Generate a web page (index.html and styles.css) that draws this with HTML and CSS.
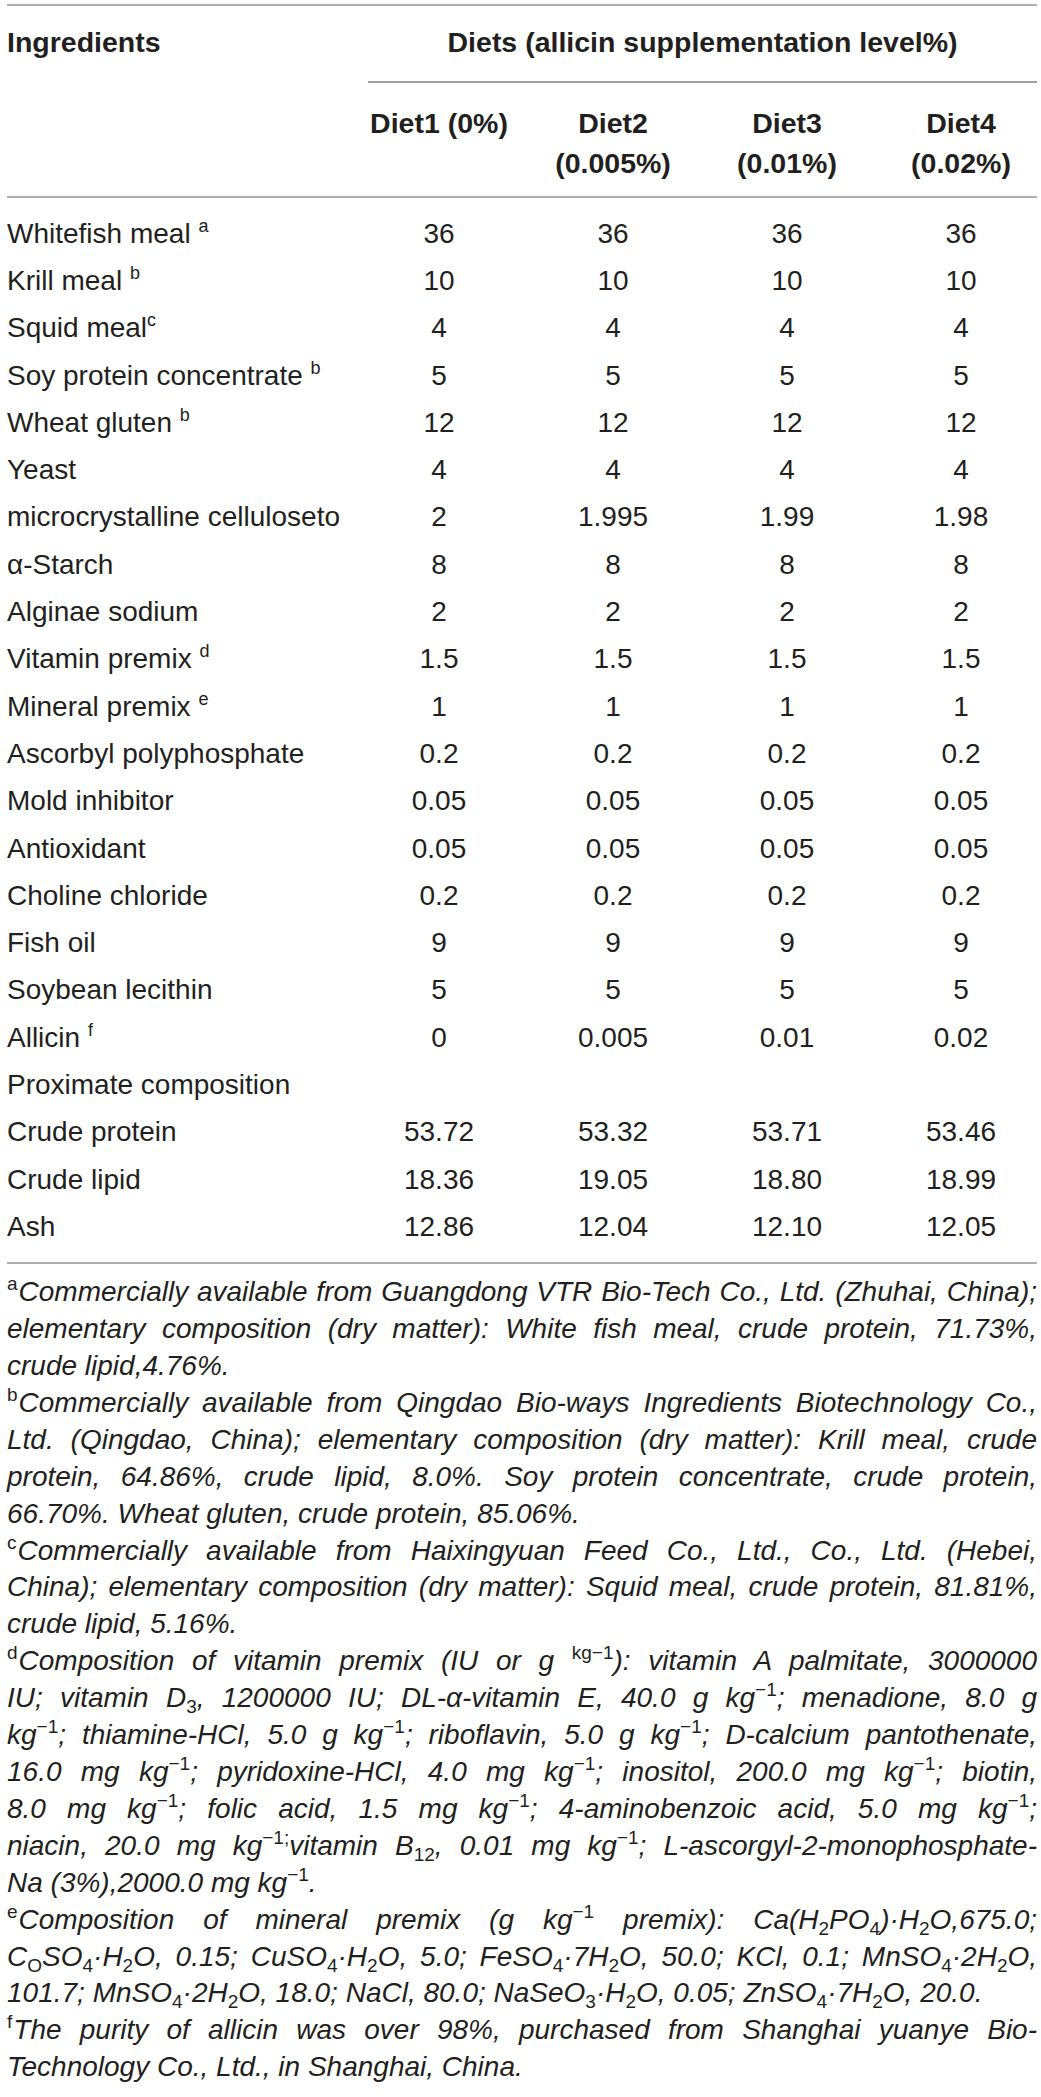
FILE: index.html
```html
<!DOCTYPE html>
<html lang="en">
<head>
<meta charset="utf-8">
<title>Diet formulation table</title>
<link rel="stylesheet" href="styles.css">
</head>
<body>
<div class="page">
  <table class="diet-table">
    <colgroup>
      <col class="c-ing">
      <col class="c-num">
      <col class="c-num">
      <col class="c-num">
      <col class="c-last">
    </colgroup>
    <thead>
      <tr class="hrow1">
        <th class="h-ing" rowspan="2">Ingredients</th>
        <th class="h-span" colspan="4"><div class="span-inner">Diets (allicin supplementation level%)</div></th>
      </tr>
      <tr class="hrow2">
        <th class="h-diet">Diet1 (0%)</th>
        <th class="h-diet">Diet2<br>(0.005%)</th>
        <th class="h-diet">Diet3<br>(0.01%)</th>
        <th class="h-diet last">Diet4<br>(0.02%)</th>
      </tr>
    </thead>
    <tbody>
      <tr class="first"><td>Whitefish meal <sup>a</sup></td><td>36</td><td>36</td><td>36</td><td class="last">36</td></tr>
      <tr><td>Krill meal <sup>b</sup></td><td>10</td><td>10</td><td>10</td><td class="last">10</td></tr>
      <tr><td>Squid meal<sup>c</sup></td><td>4</td><td>4</td><td>4</td><td class="last">4</td></tr>
      <tr><td>Soy protein concentrate <sup>b</sup></td><td>5</td><td>5</td><td>5</td><td class="last">5</td></tr>
      <tr><td>Wheat gluten <sup>b</sup></td><td>12</td><td>12</td><td>12</td><td class="last">12</td></tr>
      <tr><td>Yeast</td><td>4</td><td>4</td><td>4</td><td class="last">4</td></tr>
      <tr><td>microcrystalline celluloseto</td><td>2</td><td>1.995</td><td>1.99</td><td class="last">1.98</td></tr>
      <tr><td>α-Starch</td><td>8</td><td>8</td><td>8</td><td class="last">8</td></tr>
      <tr><td>Alginae sodium</td><td>2</td><td>2</td><td>2</td><td class="last">2</td></tr>
      <tr><td>Vitamin premix <sup>d</sup></td><td>1.5</td><td>1.5</td><td>1.5</td><td class="last">1.5</td></tr>
      <tr><td>Mineral premix <sup>e</sup></td><td>1</td><td>1</td><td>1</td><td class="last">1</td></tr>
      <tr><td>Ascorbyl polyphosphate</td><td>0.2</td><td>0.2</td><td>0.2</td><td class="last">0.2</td></tr>
      <tr><td>Mold inhibitor</td><td>0.05</td><td>0.05</td><td>0.05</td><td class="last">0.05</td></tr>
      <tr><td>Antioxidant</td><td>0.05</td><td>0.05</td><td>0.05</td><td class="last">0.05</td></tr>
      <tr><td>Choline chloride</td><td>0.2</td><td>0.2</td><td>0.2</td><td class="last">0.2</td></tr>
      <tr><td>Fish oil</td><td>9</td><td>9</td><td>9</td><td class="last">9</td></tr>
      <tr><td>Soybean lecithin</td><td>5</td><td>5</td><td>5</td><td class="last">5</td></tr>
      <tr><td>Allicin <sup>f</sup></td><td>0</td><td>0.005</td><td>0.01</td><td class="last">0.02</td></tr>
      <tr><td>Proximate composition</td><td></td><td></td><td></td><td class="last"></td></tr>
      <tr><td>Crude protein</td><td>53.72</td><td>53.32</td><td>53.71</td><td class="last">53.46</td></tr>
      <tr><td>Crude lipid</td><td>18.36</td><td>19.05</td><td>18.80</td><td class="last">18.99</td></tr>
      <tr class="final"><td>Ash</td><td>12.86</td><td>12.04</td><td>12.10</td><td class="last">12.05</td></tr>
    </tbody>
  </table>

  <div class="notes">
    <p class="note">
      <span class="ln"><sup class="mark">a</sup>Commercially available from Guangdong VTR Bio-Tech Co., Ltd. (Zhuhai, China);</span>
      <span class="ln">elementary composition (dry matter): White fish meal, crude protein, 71.73%,</span>
      <span class="ln end">crude lipid,4.76%.</span>
    </p>
    <p class="note">
      <span class="ln"><sup class="mark">b</sup>Commercially available from Qingdao Bio-ways Ingredients Biotechnology Co.,</span>
      <span class="ln">Ltd. (Qingdao, China); elementary composition (dry matter): Krill meal, crude</span>
      <span class="ln">protein, 64.86%, crude lipid, 8.0%. Soy protein concentrate, crude protein,</span>
      <span class="ln end">66.70%. Wheat gluten, crude protein, 85.06%.</span>
    </p>
    <p class="note">
      <span class="ln"><sup class="mark">c</sup>Commercially available from Haixingyuan Feed Co., Ltd., Co., Ltd. (Hebei,</span>
      <span class="ln">China); elementary composition (dry matter): Squid meal, crude protein, 81.81%,</span>
      <span class="ln end">crude lipid, 5.16%.</span>
    </p>
    <p class="note">
      <span class="ln"><sup class="mark">d</sup>Composition of vitamin premix (IU or g <sup>kg−1</sup>): vitamin A palmitate, 3000000</span>
      <span class="ln">IU; vitamin D<sub>3</sub>, 1200000 IU; DL-α-vitamin E, 40.0 g kg<sup>−1</sup>; menadione, 8.0 g</span>
      <span class="ln">kg<sup>−1</sup>; thiamine-HCl, 5.0 g kg<sup>−1</sup>; riboflavin, 5.0 g kg<sup>−1</sup>; D-calcium pantothenate,</span>
      <span class="ln">16.0 mg kg<sup>−1</sup>; pyridoxine-HCl, 4.0 mg kg<sup>−1</sup>; inositol, 200.0 mg kg<sup>−1</sup>; biotin,</span>
      <span class="ln">8.0 mg kg<sup>−1</sup>; folic acid, 1.5 mg kg<sup>−1</sup>; 4-aminobenzoic acid, 5.0 mg kg<sup>−1</sup>;</span>
      <span class="ln">niacin, 20.0 mg kg<sup>−1;</sup>vitamin B<sub>12</sub>, 0.01 mg kg<sup>−1</sup>; L-ascorgyl-2-monophosphate-</span>
      <span class="ln end">Na (3%),2000.0 mg kg<sup>−1</sup>.</span>
    </p>
    <p class="note">
      <span class="ln"><sup class="mark">e</sup>Composition of mineral premix (g kg<sup>−1</sup> premix): Ca(H<sub>2</sub>PO<sub>4</sub>)·H<sub>2</sub>O,675.0;</span>
      <span class="ln">C<sub>O</sub>SO<sub>4</sub>·H<sub>2</sub>O, 0.15; CuSO<sub>4</sub>·H<sub>2</sub>O, 5.0; FeSO<sub>4</sub>·7H<sub>2</sub>O, 50.0; KCl, 0.1; MnSO<sub>4</sub>·2H<sub>2</sub>O,</span>
      <span class="ln end">101.7; MnSO<sub>4</sub>·2H<sub>2</sub>O, 18.0; NaCl, 80.0; NaSeO<sub>3</sub>·H<sub>2</sub>O, 0.05; ZnSO<sub>4</sub>·7H<sub>2</sub>O, 20.0.</span>
    </p>
    <p class="note">
      <span class="ln"><sup class="mark">f</sup>The purity of allicin was over 98%, purchased from Shanghai yuanye Bio-</span>
      <span class="ln end">Technology Co., Ltd., in Shanghai, China.</span>
    </p>
  </div>
</div>
</body>
</html>
```

FILE: styles.css
```css
html, body {
  margin: 0;
  padding: 0;
  background: #ffffff;
}

body {
  font-family: "Liberation Sans", Arial, Helvetica, sans-serif;
  color: #231f20;
}

.page {
  padding: 4px 4px 0 7px;
  width: 1030px;
}

/* ---------- table ---------- */
.diet-table {
  width: 1030px;
  table-layout: fixed;
  border-collapse: collapse;
  border-top: 2px solid #aeaeae;
  border-bottom: 2px solid #aeaeae;
}

.c-ing { width: 345px; }
.c-num { width: 174px; }
.c-last { width: 163px; }

.diet-table th {
  font-weight: bold;
  font-size: 28.5px;
  padding: 0;
  vertical-align: top;
}

.diet-table .h-ing {
  text-align: left;
  padding-top: 19px;
  line-height: 34px;
}

.diet-table .h-span {
  text-align: center;
}

.span-inner {
  margin-left: 16px;
  padding: 19px 0 22px;
  line-height: 34px;
  border-bottom: 2px solid #a0a0a0;
}

.hrow2 {
  border-bottom: 2px solid #aeaeae;
}

.diet-table .h-diet {
  text-align: center;
  line-height: 40px;
  padding-top: 20px;
  padding-bottom: 13px;
}

.diet-table .h-diet.last {
  padding-left: 11px;
}

.diet-table td {
  font-size: 28px;
  line-height: 47.3px;
  padding: 0;
  text-align: center;
  white-space: nowrap;
}

.diet-table td:first-child {
  text-align: left;
}

.diet-table td.last {
  padding-left: 11px;
}

.diet-table tr.first td {
  padding-top: 11.7px;
}

.diet-table tr.final td {
  padding-bottom: 12px;
}

.diet-table sup {
  font-size: 18px;
  line-height: 0;
  vertical-align: 11px;
}

/* ---------- footnotes ---------- */
.notes {
  margin-top: 10px;
  font-size: 28px;
  line-height: 36.9px;
  font-style: italic;
}

.note {
  margin: 0;
}

.ln {
  display: block;
  text-align: justify;
  text-align-last: justify;
}

.ln.end {
  text-align-last: left;
}

.notes sup,
.notes sub {
  font-style: normal;
  font-size: 19px;
  line-height: 0;
}

.notes sup {
  vertical-align: 11px;
}

.notes sub {
  vertical-align: -6px;
}

.notes sup.mark {
  margin-right: 1px;
}
```
